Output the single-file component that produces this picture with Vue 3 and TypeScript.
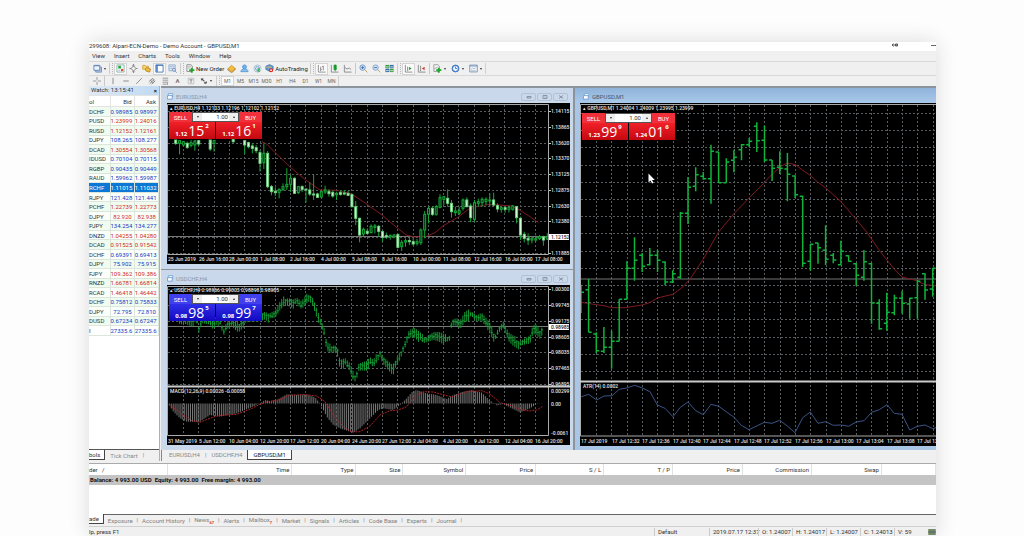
<script setup lang="ts">
type Shape = { d: string; fill?: string; stroke?: string }
type Pair = [number, number]
type Tool = { icon?: string; name?: string; text?: string; caret?: boolean; on?: boolean; sep?: 'thin' | 'grip' }

const icons: Record<string, Shape[]> = {
  windows: [
    { d: 'M3 3.5h6.5v5.5H3z', fill: '#b9cbe6', stroke: '#6f8dba' },
    { d: 'M1 1.5h6.5v5.5H1z', fill: '#eef4fc', stroke: '#5f82b8' },
    { d: 'M1 2h6.5', stroke: '#5f82b8' },
  ],
  watch: [
    { d: 'M1 1h8v8H1z', fill: '#f4f8ff', stroke: '#8fb5a4' },
    { d: 'M2.5 2h3v3h-3z', fill: '#21a83a' },
    { d: 'M5.5 5.5H8V8H5.5z', fill: '#d8503c' },
    { d: 'M2.5 7h2', stroke: '#a9c0e0' },
  ],
  target: [
    { d: 'M5 0.5v9M0.5 5h9', stroke: '#888' },
    { d: 'M5 2.2L7.8 5 5 7.8 2.2 5z', fill: '#f4f4f4', stroke: '#777' },
    { d: 'M3.8 1.6L5 .4l1.2 1.2M3.8 8.4L5 9.6l1.2-1.2', stroke: '#777' },
  ],
  folder: [
    { d: 'M.8 1.5h2.6l.8 1h3v3.3H.8z', fill: '#f5d27a', stroke: '#d4a83e' },
    { d: 'M3.8 5l1.5-1 4.2 1.6L8.4 9l-4-1.2z', fill: '#f0c04a', stroke: '#b98518' },
  ],
  panel: [
    { d: 'M1 1h8v8H1z', fill: '#fff', stroke: '#4a76b4' },
    { d: 'M1 1h2.2v8H1z', fill: '#5f8cca' },
    { d: 'M1 1.6h8', stroke: '#4a76b4' },
  ],
  tester: [
    { d: 'M1 1h7v6.5H1z', fill: '#dfe9f6', stroke: '#8ea8ce' },
    { d: 'M2 3h5M2 5h4', stroke: '#a3b8d6' },
    { d: 'M5 6.5a1.6 1.6 0 1 0 3.2 0a1.6 1.6 0 1 0-3.2 0M8 8l1.6 1.6', fill: '#e8f2fc', stroke: '#698ab8' },
  ],
  order: [
    { d: 'M1 .8h4.5l1.5 1.5v6H1z', fill: '#f8f8f8', stroke: '#888' },
    { d: 'M2 3h3.5M2 4.6h2', stroke: '#aaa' },
    { d: 'M5.4 4.2h2v1.7h1.9v2H7.4v1.7h-2V7.9H3.6v-2h1.8z', fill: '#1ea52c' },
  ],
  book: [
    { d: 'M1 5.2L5 1.5l4.2 3.6L5.4 8.6z', fill: '#f1bd3d', stroke: '#d09a30' },
    { d: 'M1 5.4v1.2l4.3 3 3.9-3.5V5', stroke: '#b47716' },
  ],
  person: [
    { d: 'M2.8 3.2a2.2 2.2 0 1 0 4.4 0a2.2 2.2 0 1 0-4.4 0', fill: '#6fb0ea', stroke: '#5a9ad8' },
    { d: 'M1 8.500c0-2.100 1.600-2.900 4-2.900s4 .8 4 2.900z', fill: '#8fc1ee', stroke: '#5a9ad8' },
  ],
  signal: [
    { d: 'M1 5a4 4 0 1 0 8 0a4 4 0 1 0-8 0', fill: '#e3eef6', stroke: '#a9c0d4' },
    { d: 'M2.8 5a2.2 2.2 0 1 0 4.4 0a2.2 2.2 0 1 0-4.4 0', stroke: '#6b9cc5' },
    { d: 'M5 4.5h2.5V9H5z', fill: '#4caf6a' },
  ],
  auto: [
    { d: 'M1 2.500l4-1.800 4 1.800v3.500L5 8 1 6z', fill: '#5b9bd8', stroke: '#4a7fb5' },
    { d: 'M1.5 3.5h6', stroke: '#f2c14a' },
    { d: 'M4.5 7a2.3 2.3 0 1 0 4.6 0a2.3 2.3 0 1 0-4.6 0', fill: '#e02a20' },
    { d: 'M6 6.2h1.7v1.7H6z', fill: '#fff' },
  ],
  bars: [{ d: 'M1.5 1v8H9.5M4 3v5M7 2v5M4 6H5.5M5.5 3H7', stroke: '#8a8a8a' }],
  candles: [
    { d: 'M1.5 1v8H9.5', stroke: '#888' },
    { d: 'M4 1h3.5v5.5H4z', fill: '#25a83a' },
    { d: 'M5.7 .5v7.500', stroke: '#168028' },
  ],
  line: [{ d: 'M1.5 1v8H9.500M2 4l2.500 1.500 2.500-1 2 1.500', stroke: '#888' }],
  zoomIn: [
    { d: 'M6 6l3.300 3.300', stroke: '#c79a3c' },
    { d: 'M1 4a3 3 0 1 0 6 0a3 3 0 1 0-6 0', fill: '#cfe2f7', stroke: '#6c92c4' },
    { d: 'M2.500 4h3M4 2.500v3', stroke: '#3a64a0' },
  ],
  zoomOut: [
    { d: 'M6 6l3.300 3.300', stroke: '#c79a3c' },
    { d: 'M1 4a3 3 0 1 0 6 0a3 3 0 1 0-6 0', fill: '#cfe2f7', stroke: '#7f9fca' },
    { d: 'M2.500 4h3', stroke: '#3a64a0' },
  ],
  tile: [
    { d: 'M.5 1h4.200v3.600H.5z', fill: '#3a9b40' },
    { d: 'M5.300 1h4.200v3.600H5.300z', fill: '#3a66b0' },
    { d: 'M.5 5.200h4.200V9H.5z', fill: '#3a66b0' },
    { d: 'M5.300 5.200h4.200V9H5.300z', fill: '#3a9b40' },
    { d: 'M1 3.200h3.200M5.800 3.200H9M1 7.400h3.200M5.800 7.400H9', stroke: '#d4ead8' },
  ],
  scroll: [
    { d: 'M1.500 1v8H9.500M4 3v5', stroke: '#888' },
    { d: 'M5.500 3L8.500 5l-3 2z', fill: '#25a83a' },
  ],
  shift: [
    { d: 'M1.500 1v8H9.500M4 2v6', stroke: '#888' },
    { d: 'M8.500 3L5.500 5l3 2z', fill: '#c83a30' },
  ],
  indicator: [
    { d: 'M1 .8h4.500L7 2.300v6H1z', fill: '#f8f8f8', stroke: '#999' },
    { d: 'M2 6c1-4 2 0 3-3', stroke: '#999' },
    { d: 'M5.400 4.200h2v1.700h1.900v2H7.400v1.700h-2V7.900H3.600v-2h1.800z', fill: '#1ea52c' },
  ],
  clock: [
    { d: 'M1.200 5a3.800 3.800 0 1 0 7.600 0a3.800 3.800 0 1 0-7.600 0', fill: '#eef6ff', stroke: '#2566b4' },
    { d: 'M1.700 5a3.300 3.300 0 1 0 6.600 0a3.300 3.300 0 1 0-6.600 0M5 2.800V5h2', stroke: '#3c7cc8' },
  ],
  template: [
    { d: 'M.8 1.200h8.400v7.600H.8z', fill: '#f4f8fc', stroke: '#7d92ae' },
    { d: 'M.8 2.200h8.400', stroke: '#6d8fc0' },
    { d: 'M2 6l2-1.500 1.500 1 2-1.500M2 7.500h5.500', stroke: '#a9b8ca' },
  ],
  cross: [{ d: 'M5 0v4M5 6v4M0 5h4M6 5h4', stroke: '#888' }],
  vline: [{ d: 'M5 1v8', stroke: '#777' }],
  hline: [{ d: 'M1.500 5h7', stroke: '#777' }],
  trend: [{ d: 'M1.500 8.500l7-7', stroke: '#777' }],
  channel: [{ d: 'M1 6l5-4.500M2 8.500l6-5.500M4.500 9L9 5M3 3.500l3 4.500M6 2l2 4', stroke: '#777' }],
  fibo: [{ d: 'M2 1.500h7M2 4h7M2 6.500h7M2 9h5M8 7v3', stroke: '#888', fill: 'none' }],
  label: [
    { d: 'M1.500 1.500h7v7h-7z', stroke: '#bbb' },
    { d: 'M3 3.500h4M5 3.500v4', stroke: '#777' },
  ],
  arrows: [
    { d: 'M1 2l3-.5V3l2 2-1 1-2-2-1.500.5z', fill: '#555' },
    { d: 'M5 6.500h2l.5-1.500L9 7 7 9l-.5-1H5z', fill: '#555' },
  ],
}

const tools: Tool[] = [
  { icon: 'windows', name: 'New chart', caret: true },
  { sep: 'grip' },
  { icon: 'watch', name: 'Market Watch', on: true },
  { icon: 'target', name: 'Data Window' },
  { icon: 'folder', name: 'Navigator' },
  { icon: 'panel', name: 'Terminal', on: true },
  { icon: 'tester', name: 'Strategy Tester' },
  { sep: 'grip' },
  { icon: 'order', text: 'New Order' },
  { icon: 'book', name: 'MetaEditor' },
  { icon: 'person', name: 'Community' },
  { icon: 'signal', name: 'Signals' },
  { icon: 'auto', text: 'AutoTrading' },
  { sep: 'grip' },
  { icon: 'bars', name: 'Bar chart', on: true },
  { icon: 'candles', name: 'Candlesticks' },
  { icon: 'line', name: 'Line chart' },
  { sep: 'thin' },
  { icon: 'zoomIn', name: 'Zoom in' },
  { icon: 'zoomOut', name: 'Zoom out' },
  { icon: 'tile', name: 'Tile windows' },
  { sep: 'grip' },
  { icon: 'scroll', name: 'Auto scroll', on: true },
  { icon: 'shift', name: 'Chart shift' },
  { sep: 'thin' },
  { icon: 'indicator', name: 'Indicators', caret: true },
  { icon: 'clock', name: 'Periods', caret: true },
  { icon: 'template', name: 'Templates', caret: true },
]

const drawTools: Tool[] = [
  { icon: 'cross', name: 'Crosshair' },
  { sep: 'thin' },
  { icon: 'vline', name: 'Vertical line' },
  { icon: 'hline', name: 'Horizontal line' },
  { icon: 'trend', name: 'Trendline' },
  { icon: 'channel', name: 'Channel' },
  { icon: 'fibo', name: 'Fibonacci' },
  { text: 'A', name: 'Text' },
  { icon: 'label', name: 'Label' },
  { icon: 'arrows', name: 'Arrows', caret: true },
]
const periods = ['M1', 'M5', 'M15', 'M30', 'H1', 'H4', 'D1', 'W1', 'MN']
const menus = ['View', 'Insert', 'Charts', 'Tools', 'Window', 'Help']

const quotes: [string, string, string, string][] = [
  ['DCHF', '0.98985', '0.98997', 'up'],
  ['PUSD', '1.23999', '1.24016', 'down'],
  ['RUSD', '1.12152', '1.12161', 'down'],
  ['DJPY', '108.265', '108.277', 'up'],
  ['DCAD', '1.30554', '1.30568', 'down'],
  ['IDUSD', '0.70104', '0.70115', 'up'],
  ['RGBP', '0.90435', '0.90449', 'up'],
  ['RAUD', '1.59962', '1.59987', 'up'],
  ['RCHF', '1.11015', '1.11032', 'picked'],
  ['RJPY', '121.428', '121.441', 'up'],
  ['PCHF', '1.22739', '1.22773', 'down'],
  ['DJPY', '82.920', '82.938', 'down'],
  ['PJPY', '134.254', '134.277', 'up'],
  ['DNZD', '1.04255', '1.04280', 'down'],
  ['DCAD', '0.91525', '0.91542', 'down'],
  ['DCHF', '0.69391', '0.69413', 'up'],
  ['DJPY', '75.902', '75.915', 'up'],
  ['FJPY', '109.362', '109.386', 'down'],
  ['RNZD', '1.66781', '1.66814', 'down'],
  ['RCAD', '1.46418', '1.46442', 'down'],
  ['DCHF', '0.75812', '0.75833', 'up'],
  ['DJPY', '72.795', '72.810', 'up'],
  ['DUSD', '0.67234', '0.67247', 'up'],
  ['I', '27335.6', '27335.6', 'up'],
]

const range = (n: number) => Array.from({ length: n }, (_, i) => i)
/* Series are stored at three samples per chart unit. */
const points = (list: Pair[], x0: number, y0: number) =>
  list.map(([x, y]) => `${(x0 + x / 3).toFixed(1)},${(y0 + y / 3).toFixed(1)}`).join(' ')

/* EURUSD: slot, high, low, body top, body bottom, 1 = falling */
const euRaw = `-22 150 165 150 160 1;-21 150 193 152 160 0;-20 153 170 155 165 0;-19 155 177 160 172 1;-18 150 172 158 166 0;-17 150 182 153 165 0;-16 150 168 152 162 1;-13 150 183 150 177 1;-12 150 185 152 160 0;-7 148 160 149 155 1;-4 150 192 152 165 1;-3 155 175 158 170 1;-2 160 190 168 175 1;-1 165 190 173 182 1;0 180 245 188 220 1;1 160 237 190 218 0;2 183 295 190 290 1;3 285 316 290 305 1;4 292 318 304 308 1;5 295 325 298 307 0;6 280 303 290 298 0;7 235 300 283 290 0;8 255 306 265 283 0;9 262 312 265 310 1;10 288 312 290 308 0;11 286 306 290 298 1;12 297 338 297 300 1;13 277 318 300 312 1;14 255 330 312 315 1;15 308 324 312 322 1;16 300 323 305 321 0;17 287 312 300 306 0;18 298 320 305 311 1;19 302 323 307 318 1;20 305 330 310 314 0;21 302 317 308 313 1;22 300 316 309 312 1;23 303 318 310 316 1;24 310 353 314 350 1;25 333 405 350 385 1;26 383 457 385 435 1;27 413 438 418 432 0;28 415 432 424 430 1;29 403 430 409 428 0;30 402 430 408 412 0;31 405 440 409 424 1;32 422 455 425 442 1;33 428 447 437 441 1;34 433 449 437 441 0;35 432 445 435 441 0;36 430 475 434 472 1;37 450 483 457 470 0;38 445 470 452 456 0;39 440 465 452 455 1;40 445 467 455 462 1;41 447 467 455 460 0;42 415 465 420 458 0;43 363 445 373 420 0;44 350 400 355 373 0;45 350 378 355 373 1;46 345 377 350 373 0;47 313 355 323 352 0;48 318 345 320 328 0;49 298 350 325 340 1;50 330 383 340 365 1;51 350 378 363 368 0;52 350 375 362 370 0;53 325 362 330 355 0;54 322 352 330 350 1;55 340 397 348 383 1;56 330 395 338 388 0;57 326 350 335 340 0;58 322 350 328 338 0;59 322 345 328 335 0;60 310 350 330 332 0;61 308 350 330 345 1;62 340 367 347 357 1;63 350 368 353 358 0;64 350 368 353 358 1;65 347 368 352 358 0;66 345 362 348 358 0;67 348 400 350 383 1;68 380 450 385 435 1;69 425 457 433 445 1;70 430 465 445 450 1;71 438 460 446 450 0;72 437 455 446 450 0;73 435 450 440 446 0;74 437 467 441 450 1;75 430 450 440 447 0`
const euCandles = euRaw.split(';').map((row) => {
  const [slot, high, low, top, bottom, falling] = row.split(' ').map(Number)
  return {
    x: 260 + 3.83 * slot,
    high: 90 + high / 3,
    low: 90 + low / 3,
    top: 90 + top / 3,
    size: Math.max(1, (bottom - top) / 3),
    falling: falling === 1,
  }
})
const euAverage = points(
  [[5, 155], [20, 162], [46, 188], [91, 232], [137, 270], [180, 300], [230, 301], [275, 312], [321, 343], [367, 376], [413, 415], [440, 436], [465, 441], [500, 439], [525, 428], [550, 407], [596, 380], [625, 358], [650, 350], [688, 343], [755, 348], [780, 361], [810, 380], [835, 398]],
  260, 90,
)
const euPrices = ['1.14115', '1.13865', '1.13620', '1.13370', '1.13125', '1.12875', '1.12630', '1.12380', '', '1.11885']
const euTimes = ['25 Jun 2019', '26 Jun 16:00', '28 Jun 00:00', '1 Jul 08:00', '2 Jul 16:00', '4 Jul 00:00', '5 Jul 08:00', '8 Jul 16:00', '10 Jul 00:00', '11 Jul 08:00', '12 Jul 16:00', '16 Jul 00:00', '17 Jul 08:00']

/* USDCHF */
const at = (list: Pair[], x: number) => {
  const next = list.findIndex((p) => p[0] >= x)
  if (next < 0) return list[list.length - 1][1]
  if (next === 0) return list[0][1]
  const a = list[next - 1]
  const b = list[next]
  return a[1] + ((b[1] - a[1]) * (x - a[0])) / (b[0] - a[0])
}
const chfMid: Pair[] = [[20, 70], [30, 120], [60, 152], [75, 148], [95, 152], [110, 150], [118, 185], [125, 150], [150, 150], [160, 165], [170, 145], [182, 160], [190, 190], [200, 168], [215, 158], [235, 172], [250, 155], [265, 148], [300, 140], [315, 132], [325, 140], [345, 135], [360, 110], [372, 95], [385, 92], [400, 98], [410, 95], [425, 108], [435, 95], [445, 82], [455, 85], [465, 110], [475, 140], [483, 165], [492, 185], [500, 232], [510, 238], [525, 232], [533, 245], [540, 280], [555, 277], [570, 295], [578, 318], [588, 325], [595, 290], [605, 287], [620, 285], [630, 275], [640, 285], [660, 250], [670, 270], [685, 285], [698, 298], [708, 285], [720, 260], [735, 222], [748, 190], [765, 187], [778, 200], [790, 212], [805, 205], [820, 197], [840, 200], [855, 210], [868, 205], [875, 158], [890, 155], [900, 165], [915, 140], [935, 132], [950, 145], [965, 140], [980, 160], [990, 175], [1005, 205], [1015, 182], [1030, 165], [1045, 200], [1060, 213], [1080, 222], [1095, 215], [1110, 210], [1118, 182], [1125, 178], [1140, 190], [1150, 172]]
const chfBars = range(194).map((i) => {
  const sx = 30 + i * 5.78
  const mid = at(chfMid, sx)
  const up = 6 + ((i * 37) % 12)
  const down = 6 + ((i * 53) % 13)
  const x = 160 + sx / 3
  const y = (v: number) => (270 + (mid + v) / 3).toFixed(1)
  return `M${x.toFixed(1)} ${y(-up)}V${y(down)}M${(x - 1).toFixed(1)} ${y((i % 3) * 3 - 4)}h2`
}).join('')
const macd: Pair[] = [[27, 405], [40, 425], [60, 445], [80, 455], [118, 456], [150, 435], [180, 440], [200, 436], [230, 430], [260, 418], [290, 405], [305, 397], [315, 390], [330, 393], [350, 390], [365, 382], [380, 373], [410, 375], [440, 373], [465, 382], [480, 400], [500, 440], [520, 465], [545, 477], [580, 488], [600, 475], [630, 445], [655, 420], [670, 415], [700, 420], [720, 405], [740, 385], [755, 367], [770, 360], [800, 370], [830, 375], [860, 387], [880, 375], [910, 365], [935, 360], [965, 368], [990, 392], [1010, 406], [1030, 402], [1055, 415], [1080, 427], [1110, 415], [1130, 402], [1150, 399]]
const macdBars = range(194).map((i) => {
  const sx = 28 + i * 5.78
  return `M${(160 + sx / 3).toFixed(1)} 403.5V${(270 + at(macd, sx) / 3).toFixed(1)}`
}).join('')
const macdSignal = points(
  [[27, 403], [50, 420], [70, 435], [95, 452], [120, 457], [150, 445], [175, 437], [230, 433], [270, 418], [300, 403], [325, 395], [355, 390], [390, 375], [440, 374], [470, 378], [495, 395], [520, 435], [550, 470], [575, 486], [600, 485], [630, 468], [660, 435], [690, 422], [715, 420], [740, 410], [765, 378], [790, 365], [820, 366], [875, 381], [920, 365], [965, 362], [990, 372], [1020, 398], [1055, 407], [1085, 420], [1110, 423], [1130, 420], [1150, 408]],
  160, 270,
)
const chfPrices = ['1.00300', '0.99745', '0.99175', '0.98605', '0.98035', '0.97465', '0.96895']
const chfTimes = ['31 May 2019', '5 Jun 12:00', '10 Jun 04:00', '12 Jun 20:00', '17 Jun 12:00', '20 Jun 04:00', '24 Jun 20:00', '27 Jun 12:00', '2 Jul 04:00', '4 Jul 20:00', '9 Jul 12:00', '12 Jul 04:00', '16 Jul 20:00']

/* GBPUSD: high, low, open, close */
const gbRaw = `590 675 613 613;573 733 605 733;733 795 738 788;717 795 790 778;728 842 778 760;634 760 760 634;520 634 634 541;448 578 541 517;495 552 502 535;480 532 530 502;485 552 502 517;520 592 522 582;547 585 582 557;372 572 568 376;267 408 376 298;238 310 295 260;252 275 265 272;170 347 272 190;192 285 192 284;211 284 284 222;186 253 217 208;168 217 185 170;150 177 170 160;103 192 115 158;113 222 157 216;216 279 216 241;190 258 238 241;195 340 243 259;262 330 264 320;323 537 325 526;468 548 520 469;464 527 465 479;412 531 487 514;495 526 502 516;458 532 530 490;502 521 503 520;525 593 527 562;486 578 568 521;525 707 527 645;634 725 646 722;614 728 706 673;620 682 674 630;608 677 631 646;629 692 648 631;576 692 629 580;556 635 557 606;540 626 603 541`
const gbBars = gbRaw.split(';').map((row, i) => {
  const [high, low, open, close] = row.split(' ').map((v) => (88 + Number(v) / 3).toFixed(1))
  const x = 581 + 7.645 * i
  return `M${x.toFixed(1)} ${high}V${low}M${(x - 3).toFixed(1)} ${open}h3M${x.toFixed(1)} ${close}h3`
}).join('')
const gbAverage = points(
  [[18, 643], [64, 650], [87, 653], [110, 659], [150, 659], [201, 651], [224, 644], [247, 630], [293, 619], [320, 600], [345, 573], [384, 515], [430, 433], [476, 378], [522, 330], [568, 284], [585, 265], [614, 238], [630, 228], [645, 226], [663, 231], [683, 247], [705, 262], [728, 282], [751, 299], [797, 340], [843, 394], [875, 432], [915, 490], [955, 540], [981, 567], [1005, 573], [1025, 578], [1050, 590], [1083, 593]],
  575, 88,
)
const atr = points(
  [[34, 80], [56, 73], [80, 90], [102, 78], [126, 77], [148, 58], [170, 54], [194, 46], [217, 54], [240, 65], [262, 105], [285, 115], [309, 140], [331, 112], [354, 96], [377, 122], [400, 134], [423, 103], [446, 109], [492, 142], [514, 166], [537, 179], [583, 157], [606, 160], [629, 151], [652, 168], [675, 188], [698, 143], [721, 126], [744, 160], [767, 155], [790, 166], [812, 165], [836, 169], [858, 156], [882, 152], [905, 127], [928, 119], [951, 104], [973, 130], [996, 133], [1019, 180], [1042, 169], [1065, 165], [1088, 176], [1098, 173]],
  570, 370,
)
const gbTimes = ['17 Jul 2019', '17 Jul 12:32', '17 Jul 12:36', '17 Jul 12:40', '17 Jul 12:44', '17 Jul 12:48', '17 Jul 12:52', '17 Jul 12:56', '17 Jul 13:00', '17 Jul 13:04', '17 Jul 13:08', '17 Jul 13:']

const tradeColumns: [string, number][] = [
  ['der   /', 79], ['Time', 124], ['Type', 64], ['Size', 47], ['Symbol', 63], ['Price', 70],
  ['S / L', 68], ['T / P', 69], ['Price', 70], ['Commission', 69], ['Swap', 70], ['', 54],
]
const share = (w: number) => ({ width: `${((w / 847) * 100).toFixed(2)}%` })
const terminalTabs: [string, string][] = [
  ['Exposure', ''], ['Account History', ''], ['News', '67'], ['Alerts', ''], ['Mailbox', '7'], ['Market', ''],
  ['Signals', ''], ['Articles', ''], ['Code Base', ''], ['Experts', ''], ['Journal', ''],
]
const status = ['O: 1.24007', 'H: 1.24017', 'L: 1.24007', 'C: 1.24013', 'V: 59']
const deals = {
  eu: { tone: 'red', sell: ['1.12', '15', '2'], buy: ['1.12', '16', '1'] },
  chf: { tone: 'blue', sell: ['0.98', '98', '5'], buy: ['0.98', '99', '7'] },
  gb: { tone: 'red', sell: ['1.23', '99', '9'], buy: ['1.24', '01', '6'] },
}
const windows = [
  { id: 'eu', title: 'EURUSD,H4', box: '167 103 403 161', deal: deals.eu },
  { id: 'chf', title: 'USDCHF,H4', box: '167 285 403 160', deal: deals.chf },
  { id: 'gb', title: 'GBPUSD,M1', box: '580 103 356 343', deal: deals.gb },
]
</script>

<template>
  <main class="frame">
    <header class="titlebar">
      <span>299608: Alpari-ECN-Demo - Demo Account - GBPUSD,M1</span>
      <span class="titlebar-end">
        <svg class="pin" viewBox="0 0 8 6"><path d="M1 3h6M2.500 1.500L1 3l1.500 1.500M4.500 2h2v2h-2z" fill="none" stroke="#555" /></svg>
        <svg class="dash" viewBox="0 0 5 6"><path d="M0 3.500h5" stroke="#666" /></svg>
      </span>
    </header>
    <nav class="menu">
      <button v-for="m in menus" :key="m" type="button">{{ m }}</button>
    </nav>

    <div class="toolbar">
      <template v-for="(t, i) in tools" :key="i">
        <span v-if="t.sep" :class="['sep', t.sep]"></span>
        <button v-else type="button" :class="['tool', { on: t.on, wide: t.caret, text: t.text }]" :aria-label="t.text ?? t.name">
          <svg class="icon" viewBox="0 0 10 10">
            <path v-for="(s, k) in icons[t.icon!]" :key="k" :d="s.d" :fill="s.fill ?? 'none'" :stroke="s.stroke ?? 'none'" />
          </svg>
          <span v-if="t.text">{{ t.text }}</span>
          <i v-if="t.caret" class="caret"></i>
        </button>
      </template>
      <span class="sep end"></span>
    </div>
    <div class="toolbar second">
      <template v-for="(t, i) in drawTools" :key="i">
        <span v-if="t.sep" :class="['sep', t.sep]"></span>
        <button v-else type="button" :class="['tool', { wide: t.caret }]" :aria-label="t.name">
          <svg v-if="t.icon" class="icon" viewBox="0 0 10 10">
            <path v-for="(s, k) in icons[t.icon]" :key="k" :d="s.d" :fill="s.fill ?? 'none'" :stroke="s.stroke ?? 'none'" />
          </svg>
          <b v-else>{{ t.text }}</b>
          <i v-if="t.caret" class="caret"></i>
        </button>
      </template>
      <span class="sep grip"></span>
      <button v-for="(p, i) in periods" :key="p" type="button" :class="['tool period', { on: i === 0 }]">{{ p }}</button>
      <span class="sep end"></span>
    </div>

    <section class="work">
      <aside class="watch">
        <div class="watch-title"><span>Watch: 13:15:41</span><button type="button" aria-label="Close">×</button></div>
        <table class="quotes">
          <thead><tr><th>ol</th><th>Bid</th><th>Ask</th></tr></thead>
          <tbody>
            <tr v-for="(q, i) in quotes" :key="i" :class="q[3]">
              <td>{{ q[0] }}</td><td>{{ q[1] }}</td><td>{{ q[2] }}</td>
            </tr>
          </tbody>
        </table>
        <div class="watch-tabs"><button type="button" class="current">bols</button><button type="button">Tick Chart</button><span>|</span></div>
      </aside>

      <div class="desk">
        <div class="windows">
          <article v-for="w in windows" :key="w.id" :class="['window', w.id]">
            <header class="window-title">
              <svg class="window-icon" viewBox="0 0 8 8">
                <path d="M1.500 .5h5v4h-5z" fill="#e6f0fa" stroke="#7da7d4" />
                <path d="M.5 3h5.500v4H.5z" fill="#fff" stroke="#6b9bd0" />
              </svg>
              <span>{{ w.title }}</span>
              <span v-if="w.id !== 'gb'" class="window-buttons">
                <button type="button" aria-label="Minimize"><svg viewBox="0 0 6 4"><path d="M1 1.500h4v1.500H1z" fill="none" stroke="#8894a5" /></svg></button>
                <button type="button" aria-label="Maximize"><svg viewBox="0 0 6 4"><path d="M1 .5h4v3H1zM2.500 2h1" fill="none" stroke="#8894a5" /></svg></button>
                <button type="button" aria-label="Close"><svg viewBox="0 0 6 4"><path d="M1 .5l4 3M5 .5l-4 3" fill="none" stroke="#8894a5" /></svg></button>
              </span>
            </header>
            <div class="chart">
              <svg v-if="w.id === 'eu'" :viewBox="w.box" class="plot">
                <g class="grid">
                  <path v-for="i in range(24)" :key="'v' + i" :d="`M${183 + Math.round(i * 15.3)}.5 105V254`" />
                  <path v-for="i in range(10)" :key="'h' + i" :d="`M168 ${111 + Math.round(i * 15.78)}.5H548`" />
                </g>
                <path class="price-line" d="M167 236.500H549" />
                <polyline class="average" :points="euAverage" />
                <g v-for="(c, i) in euCandles" :key="'c' + i">
                  <path class="wick" :d="`M${c.x} ${c.high}V${c.low}`" />
                  <rect :class="c.falling ? 'fall' : 'rise'" :x="c.x - 1" :y="c.top" width="2" :height="c.size" />
                </g>
                <path class="border" d="M167.500 104.500H548.500V254.500H167.500z" />
                <text x="170" y="110">▴ EURUSD,H4  1.12103 1.12196 1.12102 1.12152</text>
                <g v-for="(p, i) in euPrices" :key="'p' + i">
                  <path v-if="p" class="tick" :d="`M549 ${111 + Math.round(i * 15.78)}.5h2`" />
                  <text x="551" :y="113 + Math.round(i * 15.78)">{{ p }}</text>
                </g>
                <rect x="549" y="234" width="20" height="6" fill="#fff" />
                <text x="551" y="239" class="dark">1.12152</text>
                <text v-for="(t, i) in euTimes" :key="t" :x="168 + Math.round(i * 30.6)" y="261">{{ t }}</text>
              </svg>
              <svg v-else-if="w.id === 'chf'" :viewBox="w.box" class="plot">
                <g class="grid">
                  <path v-for="i in range(24)" :key="'v' + i" :d="`M${183 + Math.round(i * 15.3)}.5 287V435`" />
                  <path v-for="i in range(7)" :key="'h' + i" :d="`M168 ${289 + Math.round(i * 15.85)}.5H548`" />
                </g>
                <path class="price-line" d="M167 326.500H549" />
                <path class="bars thin-bars" :d="chfBars" />
                <path class="macd" :d="macdBars" />
                <polyline class="signal" :points="macdSignal" />
                <path class="border" d="M167.500 286.500H548.500V435.500H167.500z" />
                <path class="split" d="M167 386.500H570" />
                <text x="170" y="292">▴ USDCHF,H4  0.98966 0.99003 0.98898 0.98985</text>
                <text x="170" y="393">MACD(12,26,9) 0.00026 -0.00058</text>
                <g v-for="(p, i) in chfPrices" :key="p">
                  <path class="tick" :d="`M549 ${289 + Math.round(i * 15.85)}.5h2`" />
                  <text x="551" :y="291 + Math.round(i * 15.85)">{{ p }}</text>
                </g>
                <rect x="549" y="324" width="20" height="6" fill="#fff" />
                <text x="551" y="329" class="dark">0.98985</text>
                <text x="551" y="393">0.00299</text>
                <text x="551" y="406">0.00</text>
                <text x="551" y="435">-0.0061</text>
                <text v-for="(t, i) in chfTimes" :key="t" :x="168 + Math.round(i * 30.6)" y="443">{{ t }}</text>
              </svg>
              <svg v-else :viewBox="w.box" class="plot">
                <g class="grid">
                  <path v-for="i in range(23)" :key="'v' + i" :d="`M${596 + Math.round(i * 15.3)}.5 105V436`" />
                  <path v-for="i in range(16)" :key="'h' + i" :d="`M581 ${113 + Math.round(i * 17.2)}.5H936`" />
                </g>
                <path class="price-line" d="M580 279H936" />
                <polyline class="average" :points="gbAverage" />
                <path class="bars" :d="gbBars" />
                <polyline class="atr" :points="atr" />
                <path class="border" d="M936 104.500H580.500V436H936" />
                <path class="split" d="M580 381.500H936" />
                <text x="583" y="110">▴ GBPUSD,M1  1.24004 1.24009 1.23995 1.23999</text>
                <text x="583" y="388">ATR(14) 0.0002</text>
                <text v-for="(t, i) in gbTimes" :key="t" :x="581 + Math.round(i * 30.58)" y="443">{{ t }}</text>
                <path d="M648.500 173.500v9l2-2 1.500 3 1.500-.7-1.500-2.800h2.800z" fill="#fff" />
              </svg>
              <div :class="['deal', w.deal.tone]">
                <div class="deal-top">
                  <button type="button" class="side">SELL</button>
                  <span class="volume">
                    <button type="button" aria-label="Less"><i class="caret"></i></button>
                    <input type="text" value="1.00" :aria-label="w.title + ' volume'" />
                    <button type="button" aria-label="More"><i class="caret up"></i></button>
                  </span>
                  <button type="button" class="side">BUY</button>
                </div>
                <div class="deal-prices">
                  <button v-for="(p, k) in [w.deal.sell, w.deal.buy]" :key="k" type="button">
                    <small>{{ p[0] }}</small><strong>{{ p[1] }}</strong><sup>{{ p[2] }}</sup>
                  </button>
                </div>
              </div>
            </div>
          </article>
        </div>
        <nav class="chart-tabs">
          <button type="button">EURUSD,H4</button><span>|</span><button type="button">USDCHF,H4</button>
          <button type="button" class="current">GBPUSD,M1</button>
        </nav>
      </div>
    </section>

    <section class="terminal">
      <table class="orders">
        <colgroup><col v-for="(c, i) in tradeColumns" :key="i" :style="share(c[1])" /></colgroup>
        <thead><tr><th v-for="(c, i) in tradeColumns" :key="i">{{ c[0] }}</th></tr></thead>
        <tbody><tr><td :colspan="tradeColumns.length">Balance: 4 993.00 USD&nbsp; Equity: 4 993.00&nbsp; Free margin: 4 993.00</td></tr></tbody>
      </table>
      <nav class="terminal-tabs">
        <button type="button" class="current">ade</button>
        <template v-for="t in terminalTabs" :key="t[0]">
          <button type="button">{{ t[0] }}<sub v-if="t[1]">{{ t[1] }}</sub></button><span>|</span>
        </template>
      </nav>
    </section>
    <footer class="status">
      <span class="help">lp, press F1</span>
      <span class="profile">Default</span>
      <span class="cell date">2019.07.17 12:37</span>
      <span v-for="s in status" :key="s" class="cell">{{ s }}</span>
      <svg class="net" viewBox="0 0 8 8"><path d="M0 1h8v6H0z" fill="#8fa878" /><path d="M2 1v6M4 1v6M6 1v6M0 4h8" stroke="#566" /></svg>
    </footer>
  </main>
</template>

<style>
body {
  margin: 0;
  background: #fdfdfd;
  overflow: hidden;
}
</style>

<style scoped>
* { box-sizing: border-box; }
.frame {
  display: flex;
  flex-direction: column;
  min-height: calc(100vh - 42px);
  margin: 42px 88px 0 89px;
  background: #f0f0f0;
  box-shadow: 0 0 20px rgba(0, 0, 0, 0.14);
  color: #333;
  font: 6px/8px Roboto, "Open Sans", sans-serif;
  white-space: nowrap;
}
button, input {
  margin: 0;
  padding: 0;
  border: 0;
  background: none;
  color: inherit;
  font: inherit;
}
.titlebar {
  display: flex;
  justify-content: space-between;
  height: 9px;
  background: #fff;
}
.titlebar-end { display: flex; gap: 32px; }
.pin { width: 8px; height: 6px; }
.dash { width: 5px; height: 6px; }
.menu {
  display: flex;
  gap: 9px;
  height: 10px;
  padding-left: 3px;
  align-items: center;
}
.toolbar {
  display: flex;
  align-items: center;
  height: 14px;
  padding-left: 1px;
  border-top: 1px solid #d9d9d9;
}
.toolbar.second { height: 11px; }
.tool {
  display: flex;
  align-items: center;
  justify-content: center;
  width: 13px;
  height: 12px;
  border: 1px solid transparent;
}
.second .tool { height: 10px; color: #777; }
.tool.on { background: #fafafa; border-color: #d4d4d4; }
.tool.wide { width: 18px; gap: 2px; }
.tool.text { width: auto; gap: 1px; color: #222; }
.second .tool.period { font-size: 5px; color: #666; }
.icon { width: 9px; height: 9px; flex: none; }
.second .icon { width: 8px; height: 8px; }
.caret {
  width: 0;
  height: 0;
  border: 1px solid transparent;
  border-top: 2px solid #333;
  border-bottom: 0;
}
.caret.up { border-top: 0; border-bottom: 2px solid #333; }
.sep { height: 11px; flex: none; }
.sep.thin { width: 1px; margin: 0 1px; background: #c8c8c8; }
.sep.grip { width: 4px; margin: 0 1px; border-left: 1px solid #ccc; border-right: 1px dotted #b8b8b8; }
.sep.end { width: 1px; background: #d0d0d0; }
.work { display: flex; }
.watch {
  display: flex;
  flex-direction: column;
  width: 71px;
  background: #fff;
  border-right: 1px solid #b0b0b0;
}
.watch-title {
  display: flex;
  justify-content: space-between;
  height: 9px;
  padding: 0 2px;
  background: linear-gradient(90deg, #dfe9f3, #bfdaf3);
}
.watch-title button { font-weight: 700; color: #222; }
.quotes {
  width: 100%;
  height: 241px;
  border-collapse: collapse;
  table-layout: fixed;
}
.quotes th, .quotes td {
  padding: 0 2px 0 0;
  border: 1px solid #dde6dd;
  border-left: 0;
  text-align: right;
  line-height: 7px;
  font-weight: 400;
}
.quotes th { border-color: #e4e4e4; height: 11px; }
.quotes th:first-child, .quotes td:first-child { width: 21px; text-align: left; color: #333; }
.quotes tr.up { color: #2436c4; }
.quotes tr.down { color: #d42a20; }
.quotes tbody tr { background: #effcef; }
.quotes tbody tr:nth-child(even) { background: #fafffa; }
.quotes tbody tr:last-child { background: #fff; }
.quotes tbody tr.picked, .quotes tbody tr.picked td:first-child { background: #0a78d4; color: #fff; }
.watch-tabs {
  display: flex;
  gap: 5px;
  height: 12px;
  margin-top: auto;
  border-top: 1px solid #555;
  background: #f0f0f0;
  color: #888;
}
.watch-tabs .current, .terminal-tabs .current {
  padding-right: 4px;
  border-right: 1px solid #444;
  border-bottom: 1px solid #444;
  background: #fff;
  color: #333;
}
.desk { flex: 1; min-width: 0; display: flex; flex-direction: column; padding-left: 1px; }
.windows {
  display: grid;
  grid-template-columns: 412fr 361fr;
  gap: 1px 2px;
  padding-top: 2px;
  background: #8d939b;
}
.window { background: #c9d8ea; padding: 0 3px 5px 6px; min-width: 0; }
.window.gb { grid-column: 2; grid-row: 1 / 3; padding: 0 0 4px 5px; background: #a9c6e6; }
.window-title {
  display: flex;
  align-items: center;
  gap: 2px;
  height: 15px;
  padding-top: 2px;
  color: #8a97a8;
}
.gb .window-title { color: #44566e; margin-left: -5px; padding-left: 8px; background: linear-gradient(#8fb3da, #a9c9e9); }
.window-icon { width: 7px; height: 7px; }
.window-buttons { display: flex; gap: 1px; margin-left: auto; padding-right: 2px; }
.window-buttons button { width: 15px; height: 8px; border: 1px solid #b4c1d0; border-radius: 2px; line-height: 0; }
.window-buttons svg { width: 6px; height: 4px; }
.chart { position: relative; }
.plot { display: block; width: 100%; height: auto; background: #000; }
.plot text { fill: #e4e4e4; font: 500 5px Roboto, "Open Sans", sans-serif; white-space: pre; }
.plot text.dark { fill: #222; }
.grid path { stroke: #565d61; stroke-width: 1; stroke-dasharray: 2 2; }
.price-line { stroke: #777; }
.average { fill: none; stroke: #801a22; stroke-width: 1; }
.wick { stroke: #14a838; stroke-width: 1; }
.fall { fill: #d8ffd8; stroke: #6fd080; stroke-width: 1; }
.rise { fill: #053010; stroke: #14a838; stroke-width: 1; }
.bars { fill: none; stroke: #10b43a; stroke-width: 1.5; }
.thin-bars { stroke: #159a34; stroke-width: 1; }
.macd { stroke: #777; stroke-width: 1; }
.signal { fill: none; stroke: #b02028; stroke-dasharray: 2 1; }
.atr { fill: none; stroke: #3a5488; }
.border { fill: none; stroke: #aaa; }
.split { stroke: #ccc; stroke-width: 2; }
.tick { stroke: #ccc; }
.deal { position: absolute; left: 2px; top: 9px; width: 93px; color: #fff; }
.gb .deal { top: 10px; }
.deal-top { display: flex; height: 10px; }
.side { flex: 1; line-height: 9px; }
.volume { display: flex; width: 47px; border: 1px solid #555; background: #fff; color: #333; }
.volume button { display: flex; align-items: center; justify-content: center; width: 9px; background: #eee; }
.volume input { flex: 1; width: 0; min-width: 0; text-align: right; height: 8px; padding-right: 1px; }
.deal-prices { display: flex; gap: 1px; height: 17px; }
.deal-prices button { display: flex; flex: 1; align-items: flex-end; justify-content: center; gap: 1px; }
.deal-prices small { font: 700 6px/9px "Open Sans", sans-serif; }
.deal-prices strong { font: 400 14px/16px "Open Sans", sans-serif; }
.deal-prices sup { align-self: flex-start; font: 700 6px/9px "Open Sans", sans-serif; }
.red .side { background: #f0303a; }
.red .deal-prices button { background: linear-gradient(#f02028, #c40810); }
.blue .side { background: #4040ee; }
.blue .deal-prices button { background: linear-gradient(#3030e8, #1208c0); }
.chart-tabs {
  display: flex;
  align-items: flex-start;
  height: 11px;
  gap: 5px;
  padding-left: 7px;
  border-left: 1px solid #888;
  color: #888;
}
.chart-tabs button, .chart-tabs span { height: 10px; line-height: 10px; }
.chart-tabs .current { padding: 0 5px; border: 1px solid #444; border-top: 0; background: #fff; color: #222; }
.terminal { display: flex; flex: 1; flex-direction: column; margin-top: 2px; border-top: 1px solid #aaa; background: #fff; }
.orders { width: 100%; border-collapse: collapse; table-layout: fixed; }
.orders th { height: 11px; padding: 0 2px 0 0; border-right: 1px solid #e2e2e2; text-align: right; font-weight: 400; white-space: pre; }
.orders th:first-child { text-align: left; }
.orders td { height: 10px; padding: 0 1px; background: #c4c4c4; color: #111; font-weight: 700; }
.terminal-tabs {
  display: flex;
  gap: 4px;
  height: 12px;
  margin-top: auto;
  border-top: 1px solid #666;
  background: #f0f0f0;
  color: #808080;
}
.terminal-tabs .current { margin-top: -1px; }
.terminal-tabs button, .watch-tabs button, .terminal-tabs > span, .watch-tabs > span { line-height: 9px; height: 10px; }
.terminal-tabs sub { color: #e03020; font-size: 4px; line-height: 4px; font-weight: 700; }
.status { display: flex; height: 10px; border-top: 1px solid #d0d0d0; align-items: center; }
.help { flex: 1; }
.profile { width: 55px; padding-left: 3px; border-left: 1px solid #ccc; }
.cell { width: 34px; padding-left: 3px; border-left: 1px solid #ccc; }
.cell.date { width: 49px; }
.net { width: 8px; height: 8px; }
</style>
